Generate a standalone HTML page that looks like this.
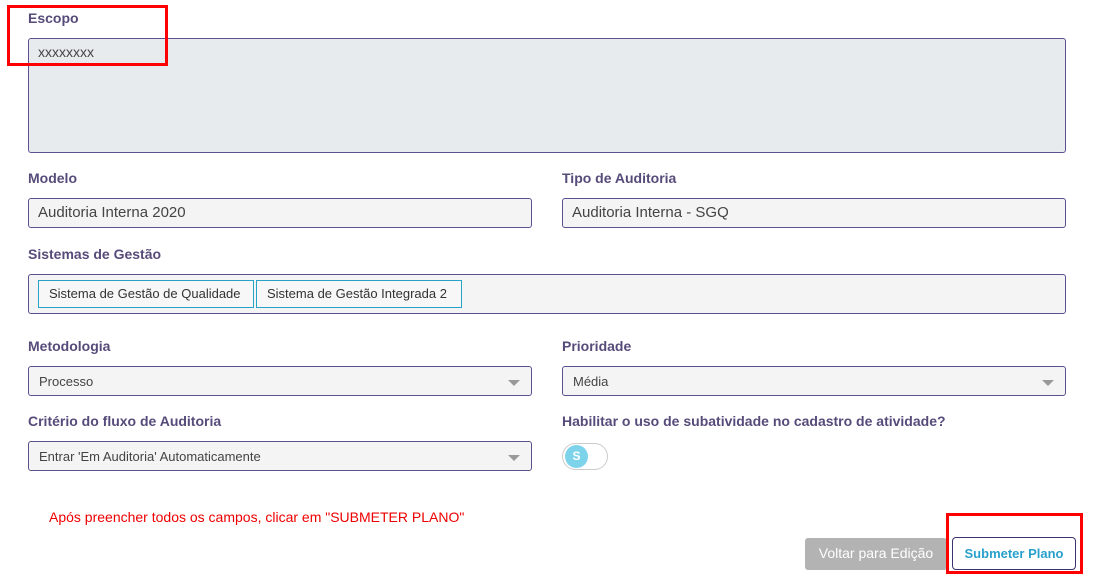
<!DOCTYPE html>
<html><head><meta charset="utf-8"><style>
body{margin:0;width:1095px;height:580px;background:#fff;font-family:"Liberation Sans","DejaVu Sans",sans-serif;position:relative;overflow:hidden}
.a{position:absolute}
.lbl{font-size:14px;font-weight:bold;color:#574b7a}
.box{border:1px solid #5e4f91;border-radius:3px;box-sizing:border-box;background:#f4f4f4;font-size:14px;color:#444}
.sel{font-size:13px;padding-left:10px;line-height:29px}
.arr{position:absolute;right:11px;top:13px;width:0;height:0;border-left:6px solid transparent;border-right:6px solid transparent;border-top:6px solid #999}
.tag{position:absolute;top:5px;height:28px;border:1px solid #27a3c9;background:#f7f7f7;font-size:13px;line-height:26px;padding:0 10px;box-sizing:border-box;color:#333}
</style></head><body>
<div class="a lbl" style="left:28px;top:10px">Escopo</div>
<div class="a box" style="left:28px;top:38px;width:1038px;height:115px;background:#e8ebee;padding:5px 9px;font-size:14px">xxxxxxxx</div>
<div class="a" style="left:7px;top:5px;width:161px;height:61px;border:3px solid red;box-sizing:border-box"></div>

<div class="a lbl" style="left:28px;top:170px">Modelo</div>
<div class="a box" style="left:28px;top:198px;width:504px;height:30px;padding-left:9px;line-height:28px;font-size:15px">Auditoria Interna 2020</div>
<div class="a lbl" style="left:562px;top:170px">Tipo de Auditoria</div>
<div class="a box" style="left:562px;top:198px;width:504px;height:30px;padding-left:9px;line-height:28px;font-size:15px">Auditoria Interna - SGQ</div>

<div class="a lbl" style="left:28px;top:246px">Sistemas de Gestão</div>
<div class="a box" style="left:28px;top:274px;width:1038px;height:40px">
<div class="tag" style="left:9px;width:216px">Sistema de Gestão de Qualidade</div>
<div class="tag" style="left:227px;width:206px">Sistema de Gestão Integrada 2</div>
</div>

<div class="a lbl" style="left:28px;top:338px">Metodologia</div>
<div class="a box sel" style="left:28px;top:366px;width:504px;height:30px">Processo<div class="arr"></div></div>
<div class="a lbl" style="left:562px;top:338px">Prioridade</div>
<div class="a box sel" style="left:562px;top:366px;width:504px;height:30px">Média<div class="arr"></div></div>

<div class="a lbl" style="left:28px;top:413px">Critério do fluxo de Auditoria</div>
<div class="a box sel" style="left:28px;top:441px;width:504px;height:30px">Entrar 'Em Auditoria' Automaticamente<div class="arr"></div></div>
<div class="a lbl" style="left:562px;top:413px">Habilitar o uso de subatividade no cadastro de atividade?</div>
<div class="a" style="left:562px;top:443px;width:46px;height:27px;border:1px solid #ccc;border-radius:14px;box-sizing:border-box;background:#fff"></div>
<div class="a" style="left:565px;top:445px;width:23px;height:23px;border-radius:50%;background:#7dd3ea;color:#fff;font-size:12px;font-weight:bold;text-align:center;line-height:23px">S</div>

<div class="a" style="left:49px;top:509px;font-size:14px;color:#e00">Após preencher todos os campos, clicar em "SUBMETER PLANO"</div>

<div class="a" style="left:805px;top:538px;width:142px;height:32px;background:#b3b3b3;border-radius:3px;color:#fff;font-size:14px;line-height:30px;text-align:center">Voltar para Edição</div>
<div class="a" style="left:952px;top:537px;width:124px;height:33px;border:1px solid #3d3270;border-radius:4px;box-sizing:border-box;color:#29a0cc;font-size:13px;font-weight:bold;line-height:31px;text-align:center">Submeter Plano</div>
<div class="a" style="left:946px;top:513px;width:137px;height:61px;border:3px solid red;box-sizing:border-box"></div>
</body></html>
